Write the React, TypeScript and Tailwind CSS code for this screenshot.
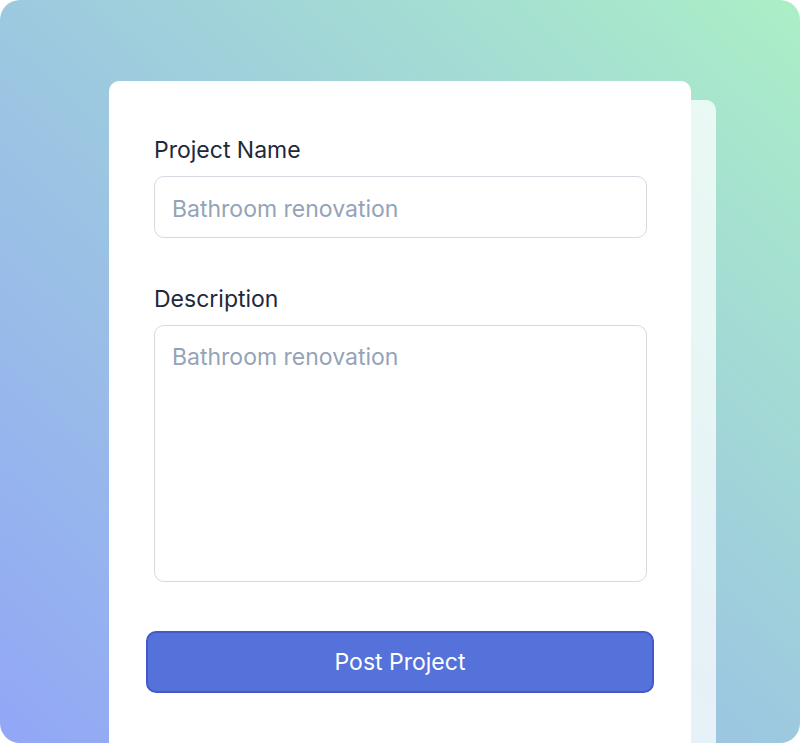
import React from 'react';

const font = { fontFamily: 'Inter, "Noto Sans", sans-serif' };

export default function App() {
  return (
    <div className="w-[800px] h-[743px] bg-white" style={font}>
      {/* 背景グラデーション */}
      <div className="relative w-[800px] h-[743px] rounded-[20px] overflow-hidden bg-linear-to-tr from-[#92a6f6] via-[#9dc9df] to-[#abefc6] pt-[81px] pl-[109px]">
        <div className="relative w-[582px] h-[700px]">
          {/* 後ろのカード */}
          <div className="absolute top-[19px] left-[25px] -right-[25px] bottom-0 rounded-[10px] bg-white/75" />

          {/* フォーム */}
          <div className="relative h-full rounded-[10px] bg-white pl-[45px] pr-[44px] pt-[55px]">
            <label className="block text-[23px] leading-7 text-[#1e293b]">Project Name</label>
            <input
              className="mt-3 block w-full h-[62px] rounded-[10px] border border-[#d5d9e0] px-[17px] pt-[3px] text-[23px] text-[#1e293b] placeholder:text-[#94a3b8] outline-none"
              placeholder="Bathroom renovation"
            />

            <label className="block mt-[47px] text-[23px] leading-7 text-[#1e293b]">Description</label>
            <textarea
              className="mt-3 block w-full h-[257px] resize-none rounded-[10px] border border-[#d5d9e0] px-[17px] pt-[17px] pb-[15px] text-[23px] leading-7 text-[#1e293b] placeholder:text-[#94a3b8] outline-none"
              placeholder="Bathroom renovation"
            />

            <button className="mt-[49px] -ml-2 w-[508px] h-[62px] rounded-[10px] border-2 border-[#4358c9] bg-[#5571da] text-[23px] text-white">
              Post Project
            </button>
          </div>
        </div>
      </div>
    </div>
  );
}
